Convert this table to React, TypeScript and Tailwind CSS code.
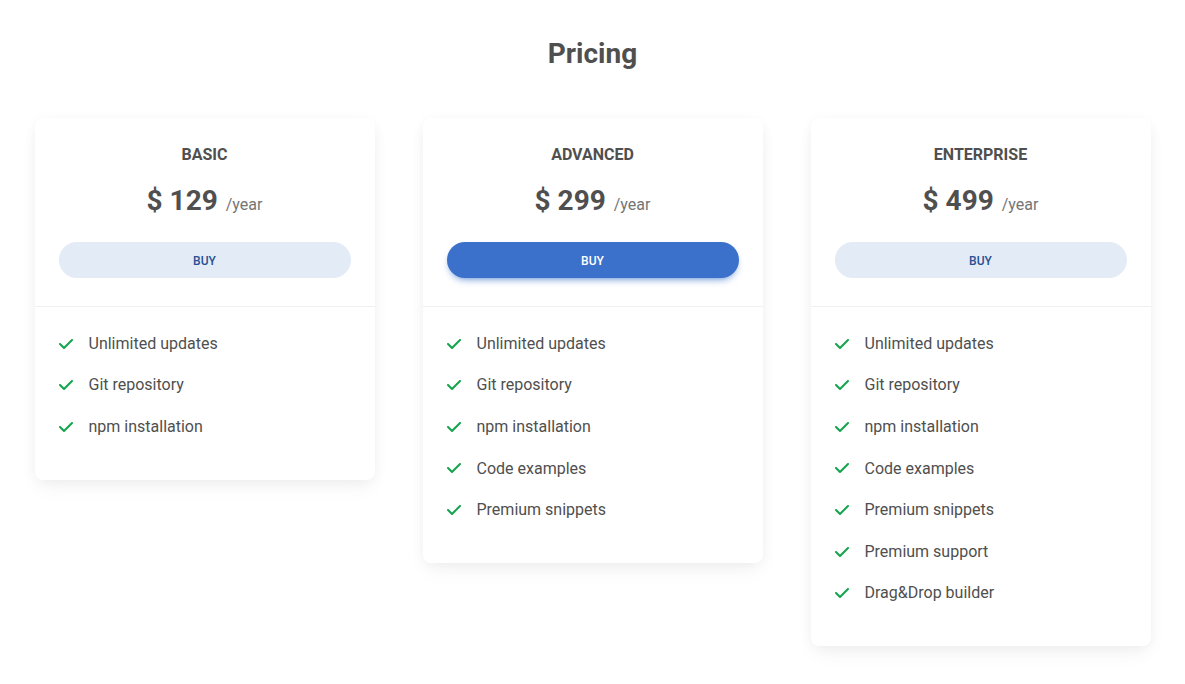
import React from "react";

type Plan = {
  name: string;
  price: string;
  primary?: boolean;
  features: string[];
};

const plans: Plan[] = [
  { name: "Basic", price: "129", features: ["Unlimited updates", "Git repository", "npm installation"] },
  {
    name: "Advanced",
    price: "299",
    primary: true,
    features: ["Unlimited updates", "Git repository", "npm installation", "Code examples", "Premium snippets"],
  },
  {
    name: "Enterprise",
    price: "499",
    features: [
      "Unlimited updates",
      "Git repository",
      "npm installation",
      "Code examples",
      "Premium snippets",
      "Premium support",
      "Drag&Drop builder",
    ],
  },
];

function Check() {
  return (
    <svg viewBox="0 0 448 512" className="w-[14px] h-[16px] shrink-0 text-[#14a44d]" fill="currentColor">
      <path d="M438.6 105.4c12.5 12.5 12.5 32.8 0 45.3l-256 256c-12.5 12.5-32.8 12.5-45.3 0l-128-128c-12.5-12.5-12.5-32.8 0-45.3s32.8-12.5 45.3 0L160 338.7 393.4 105.4c12.5-12.5 32.8-12.5 45.3 0z" />
    </svg>
  );
}

function Card({ plan }: { plan: Plan }) {
  return (
    <div className="bg-white rounded-lg shadow-[0_2px_15px_-3px_rgba(0,0,0,0.07),0_10px_20px_-2px_rgba(0,0,0,0.04)]">
      <div className="px-6 pt-6 pb-7 text-center border-b border-[#f0f0f0]">
        <p className="uppercase font-bold text-[16px] leading-[25.6px] mb-[17px]">{plan.name}</p>
        <h2 className="mb-[24px] text-[28px] leading-[33.6px]">
          <span className="font-bold">$ {plan.price}</span>
          <span className="text-[16px] leading-none text-[#757575] ml-2">/year</span>
        </h2>
        <button
          className={
            plan.primary
              ? "w-full h-9 pt-[2px] rounded-full bg-[#3b71ca] text-white text-[12px] font-medium uppercase shadow-[0_4px_9px_-4px_#3b71ca]"
              : "w-full h-9 pt-[2px] rounded-full bg-[#e3ebf7] text-[#285192] text-[12px] font-medium uppercase"
          }
        >
          Buy
        </button>
      </div>
      <div className="p-6">
        <ul>
          {plan.features.map((f) => (
            <li key={f} className="flex items-center mb-4 text-[16px] leading-[25.6px]">
              <Check />
              <span className="ml-4">{f}</span>
            </li>
          ))}
        </ul>
      </div>
    </div>
  );
}

export default function App() {
  return (
    <div className="min-h-[684px] bg-white text-[#4f4f4f] font-['Roboto',sans-serif]">
      <div className="pt-[37px]">
        <h3 className="text-center text-[28px] font-bold leading-[33.6px] mb-[47px]">Pricing</h3>
        <div className="mx-auto w-[1116px] grid grid-cols-3 gap-12 items-start">
          {plans.map((p) => (
            <Card key={p.name} plan={p} />
          ))}
        </div>
      </div>
    </div>
  );
}
